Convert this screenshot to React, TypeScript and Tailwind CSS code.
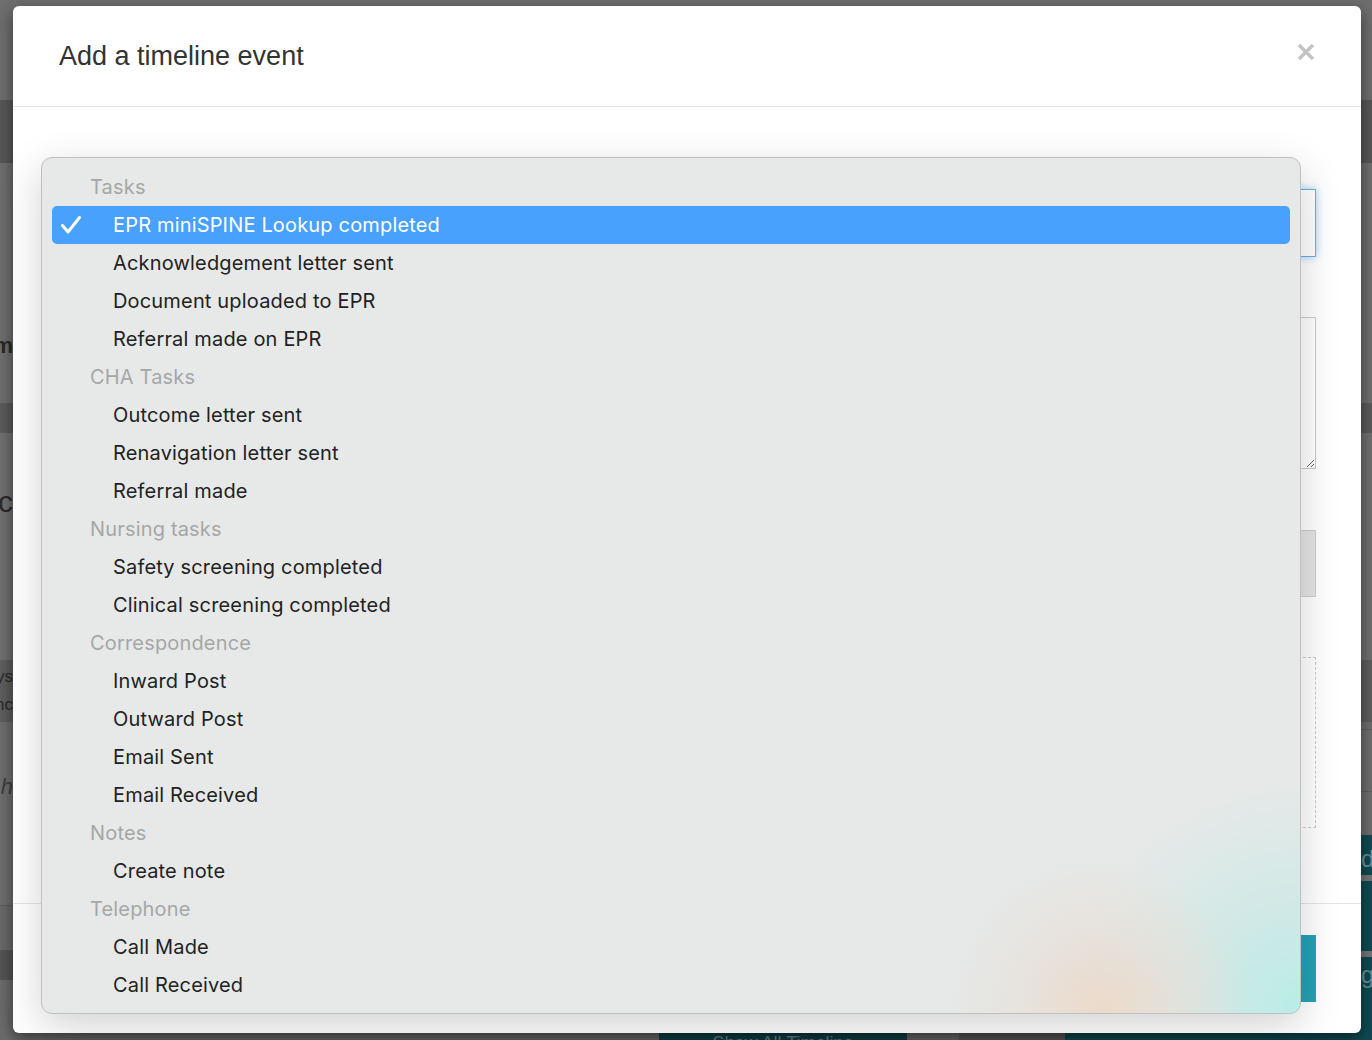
import React from 'react';

const GROUPS = [
  { label: 'Tasks', items: ['EPR miniSPINE Lookup completed', 'Acknowledgement letter sent', 'Document uploaded to EPR', 'Referral made on EPR'] },
  { label: 'CHA Tasks', items: ['Outcome letter sent', 'Renavigation letter sent', 'Referral made'] },
  { label: 'Nursing tasks', items: ['Safety screening completed', 'Clinical screening completed'] },
  { label: 'Correspondence', items: ['Inward Post', 'Outward Post', 'Email Sent', 'Email Received'] },
  { label: 'Notes', items: ['Create note'] },
  { label: 'Telephone', items: ['Call Made', 'Call Received'] },
];

const SELECTED = 'EPR miniSPINE Lookup completed';

// the page behind the overlay, only its edges show
function Backdrop() {
  return (
    <div className="flex h-screen w-full flex-col overflow-hidden bg-[#6d6d6d] font-['Liberation_Sans',sans-serif] text-[#2a2a2a]">
      <div className="h-[100px] shrink-0 bg-[#6e6e6e]" />
      <div className="h-[63px] shrink-0 bg-[#575757]" />
      <div className="flex h-[240px] shrink-0 items-start justify-end overflow-hidden whitespace-nowrap bg-[#6f6f6f] pr-[1359px] pt-[166px] text-[22px] font-bold">
        Form
      </div>
      <div className="h-[30px] shrink-0 bg-[#5b5b5b]" />
      <div className="flex h-[227px] shrink-0 justify-end overflow-hidden whitespace-nowrap bg-[#707070] pt-[46px] pr-[1359px] text-[30px]">
        Referenc
      </div>
      <div className="flex h-[62px] shrink-0 flex-col items-end justify-center overflow-hidden whitespace-nowrap bg-[#5e5e5e] pr-[1359px] text-[17px] leading-[28px]">
        <span>days</span>
        <span>Unc</span>
      </div>
      <div className="flex h-[113px] shrink-0">
        <div className="flex w-[13px] shrink-0 justify-end overflow-hidden whitespace-nowrap bg-[#6e6e6e] pt-[48px] text-[22px] italic text-[#3d3d3d]">
          h
        </div>
        <div className="flex-1 bg-[#6e6e6e]" />
        <div className="flex w-[11px] flex-col">
          <div className="h-[8px] border-b border-[#5e5e5e] bg-[#6e6e6e]" />
          <div className="h-[62px] border-b border-[#5e5e5e] bg-[#6e6e6e]" />
          <div className="flex-1 bg-[#6e6e6e]" />
        </div>
      </div>
      <div className="flex flex-1">
        <div className="flex-1 flex-col">
          <div className="h-[70px] bg-[#6e6e6e]" />
          <div className="h-[45px] border-t border-[#5d5d5d] bg-[#6a6a6a]" />
          <div className="h-[30px] bg-[#555]" />
          <div className="flex h-[60px]">
            <div className="w-[659px] bg-[#6b6b6b]" />
            <div className="flex w-[248px] justify-center bg-[#0f4148] pt-[50px] text-[18px] text-[#6b8b8f]">Show All Timeline</div>
            <div className="w-[52px] bg-[#6b6b6b]" />
            <div className="w-[106px] bg-[#5a5a5a]" />
            <div className="flex-1 bg-[#0f4a52]" />
          </div>
        </div>
        <div className="flex w-[11px] flex-col bg-[#0f4a52] text-[24px] text-[#6f9297]">
          <div className="h-[40px] overflow-hidden pt-[6px]">d</div>
          <div className="h-[6px] bg-[#777]" />
          <div className="h-[70px]" />
          <div className="h-[6px] bg-[#777]" />
          <div className="flex-1 overflow-hidden">g</div>
        </div>
      </div>
    </div>
  );
}

function Check() {
  return (
    <svg width="22" height="22" viewBox="0 0 22 22" fill="none">
      <path d="M2.5 11.5 L8 18 L19.5 3.5" stroke="white" strokeWidth="3" strokeLinecap="round" strokeLinejoin="round" />
    </svg>
  );
}

function Dropdown() {
  return (
    <div className="absolute left-[41px] top-[157px] h-[857px] w-[1260px] overflow-hidden rounded-[11px] border border-[#bfc1c1] bg-[#e6e9e8] bg-[radial-gradient(circle_at_1060px_850px,rgba(236,218,202,1)_0px,rgba(232,222,214,0.7)_70px,transparent_150px),radial-gradient(circle_at_1255px_845px,rgba(186,236,231,1)_0px,rgba(198,233,229,0.7)_90px,transparent_220px)] px-[10px] pt-[10px] font-['Inter',sans-serif] text-[20px] tracking-[0.17px] shadow-[0_12px_40px_rgba(0,0,0,0.18)]">
      {GROUPS.map((g) => (
        <div key={g.label}>
          <div className="flex h-[38px] items-center pl-[38px] text-[#a5a7a7]">{g.label}</div>
          {g.items.map((item) =>
            item === SELECTED ? (
              <div key={item} className="flex h-[38px] items-center rounded-[5px] bg-[#48a1fd] text-white">
                <div className="flex w-[61px] justify-start pl-[8px]">
                  <Check />
                </div>
                <span>{item}</span>
              </div>
            ) : (
              <div key={item} className="flex h-[38px] items-center pl-[61px] text-[#222]">
                {item}
              </div>
            )
          )}
        </div>
      ))}
    </div>
  );
}

export default function App() {
  return (
    <div className="relative h-screen w-full overflow-hidden">
      <Backdrop />

      <div className="absolute left-[13px] top-[6px] flex h-[1027px] w-[1348px] flex-col rounded-[6px] bg-white font-['Liberation_Sans',sans-serif] shadow-[0_5px_15px_rgba(0,0,0,0.5)]">
        <div className="flex h-[101px] shrink-0 items-center justify-between border-b border-[#e5e5e5] pl-[46px] pr-[46px]">
          <h4 className="text-[27px] text-[#333]">Add a timeline event</h4>
          <button className="mt-[-8px]">
            <svg width="18" height="18" viewBox="0 0 18 18">
              <path d="M2 2 L16 16 M16 2 L2 16" stroke="#c3c3c3" strokeWidth="3.5" strokeLinecap="butt" />
            </svg>
          </button>
        </div>

        <div className="flex flex-1 flex-col pl-[46px] pr-[45px] pt-[82px]">
          <div className="h-[68px] border border-[#66afe9] bg-white shadow-[0_0_8px_rgba(102,175,233,0.6)]" />
          <textarea className="mt-[60px] h-[152px] border border-[#ccc] bg-white" />
          <div className="mt-[61px] h-[67px] border border-[#ccc] bg-[#e4e4e4]" />
          <div className="mt-[60px] h-[171px] border border-dashed border-[#ccc]" />
        </div>

        <div className="flex h-[130px] shrink-0 justify-end border-t border-[#e5e5e5] pl-[46px] pr-[45px] pt-[31px]">
          <button className="h-[67px] w-[200px] bg-[#24a2b5] text-white" />
        </div>
      </div>

      <Dropdown />
    </div>
  );
}
